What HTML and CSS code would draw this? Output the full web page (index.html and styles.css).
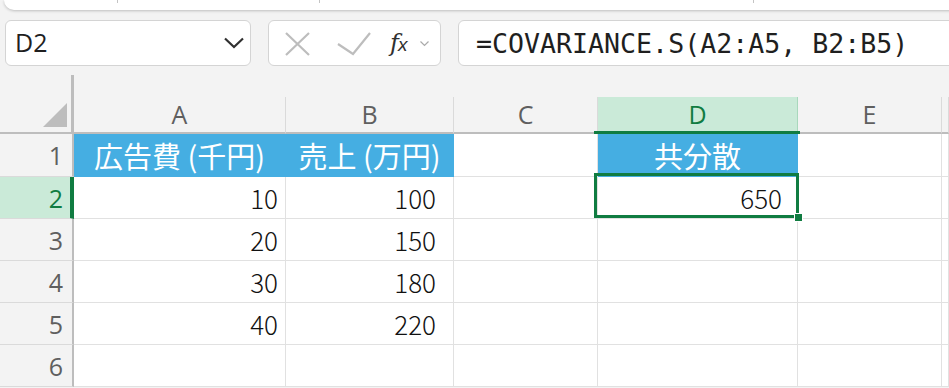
FILE: index.html
```html
<html>
  <head>
    <link rel="stylesheet" href="styles.css">
  </head>
  <body>
    <div class="topbar">
      <span class="tick t1"></span>
      <span class="tick t2"></span>
      <span class="tick t3"></span>
    </div>
    <div class="fbar">
      <div class="namebox">
        <span>D2</span>
        <svg width="20" height="12" viewBox="0 0 20 12"><path d="M1 1.5 L10 10 L19 1.5" fill="none" stroke="#303030" stroke-width="2.2"/></svg>
      </div>
      <div class="fxbox">
        <svg class="ico-x" width="25" height="24" viewBox="0 0 25 24"><path d="M1 1 L24 23 M24 1 L1 23" stroke="#bdbdbd" stroke-width="2.2" fill="none"/></svg>
        <svg class="ico-ok" width="34" height="24" viewBox="0 0 34 24"><path d="M1 12 L16 22 L33 1" stroke="#bdbdbd" stroke-width="2.2" fill="none"/></svg>
        <span class="fx"><i>f</i><i class="sub">x</i></span>
        <svg class="ico-dd" width="9" height="6" viewBox="0 0 9 6"><path d="M0.5 0.5 L4.5 4.5 L8.5 0.5" stroke="#aaaaaa" stroke-width="1.2" fill="none"/></svg>
      </div>
      <div class="formula">=COVARIANCE.S(A2:A5, B2:B5)</div>
    </div>

    <div class="sheet">
      <div class="corner">
        <svg width="74" height="59" viewBox="0 0 74 59"><polygon points="43,52 67,52 67,28" fill="#bdbdbd"/></svg>
      </div>
      <div class="spacer"></div>

      <div class="colhead">A</div>
      <div class="colhead">B</div>
      <div class="colhead">C</div>
      <div class="colhead sel">D</div>
      <div class="colhead">E</div>
      <div class="colhead"></div>

      <div class="rowhead">1</div>
      <div class="cell title">広告費 (千円)</div>
      <div class="cell title">売上 (万円)</div>
      <div class="cell"></div>
      <div class="cell title">共分散</div>
      <div class="cell"></div>
      <div class="cell"></div>

      <div class="rowhead sel">2</div>
      <div class="cell num a">10</div>
      <div class="cell num b">100</div>
      <div class="cell"></div>
      <div class="cell num d active">650</div>
      <div class="cell"></div>
      <div class="cell"></div>

      <div class="rowhead">3</div>
      <div class="cell num a">20</div>
      <div class="cell num b">150</div>
      <div class="cell"></div>
      <div class="cell"></div>
      <div class="cell"></div>
      <div class="cell"></div>

      <div class="rowhead">4</div>
      <div class="cell num a">30</div>
      <div class="cell num b">180</div>
      <div class="cell"></div>
      <div class="cell"></div>
      <div class="cell"></div>
      <div class="cell"></div>

      <div class="rowhead">5</div>
      <div class="cell num a">40</div>
      <div class="cell num b">220</div>
      <div class="cell"></div>
      <div class="cell"></div>
      <div class="cell"></div>
      <div class="cell"></div>

      <div class="rowhead">6</div>
      <div class="cell"></div>
      <div class="cell"></div>
      <div class="cell"></div>
      <div class="cell"></div>
      <div class="cell"></div>
      <div class="cell"></div>
    </div>
  </body>
</html>
```

FILE: styles.css
```css
* {
  box-sizing: border-box;
}
body {
  margin: 0;
  background: #f3f3f3;
  overflow: hidden;
  font-family: "Open Sans", "Noto Sans CJK JP", sans-serif;
}

/* top ribbon edge */
.topbar {
  height: 10px;
  margin-left: 4px;
  margin-right: -20px;
  background: #fff;
  border-radius: 0 0 10px 10px;
  box-shadow: 0 1px 3px rgba(0, 0, 0, 0.22);
  display: flex;
  align-items: flex-start;
}
.tick {
  width: 1px;
  height: 3px;
  background: #c4c4c4;
}
.t1 { margin-left: 113px; }
.t2 { margin-left: 201px; }
.t3 { margin-left: 433px; }

/* formula bar */
.fbar {
  margin-top: 10px;
  height: 46px;
  display: flex;
  padding-left: 5px;
}
.namebox {
  width: 246px;
  background: #fff;
  border: 1.5px solid #d4d4d4;
  border-radius: 6px;
  display: flex;
  align-items: center;
  justify-content: space-between;
  padding: 0 6px 0 9px;
  font-size: 25px;
  color: #1f1f1f;
}
.namebox span {
  margin-top: -2px;
}
.fxbox {
  margin-left: 17px;
  width: 173px;
  background: #fff;
  border: 1.5px solid #d4d4d4;
  border-radius: 6px;
  display: flex;
  align-items: center;
  padding-left: 16px;
}
.ico-x { margin-top: 1px; }
.ico-ok { margin-left: 27px; margin-top: 1px; }
.fx {
  margin-left: 19px;
  font-family: "DejaVu Serif", serif;
  color: #303030;
  display: flex;
  align-items: baseline;
}
.fx i {
  font-size: 24px;
}
.fx .sub {
  font-family: "Liberation Sans", sans-serif;
  font-size: 19px;
  margin-left: -1px;
}
.ico-dd { margin-left: 13px; margin-top: 2px; }
.formula {
  margin-left: 17px;
  flex: 1;
  margin-right: -20px;
  background: #fff;
  border: 1.5px solid #d4d4d4;
  border-radius: 6px;
  padding-left: 17px;
  display: flex;
  align-items: center;
  font-family: "DejaVu Sans Mono", monospace;
  font-size: 26.6px;
  color: #1f1f1f;
  white-space: nowrap;
}

/* grid */
.sheet {
  margin-top: 9px;
  display: grid;
  grid-template-columns: 74px 212px 168px 144px 200px 144px 1fr;
  grid-template-rows: 22px 37px 43px repeat(5, 42px);
}
.corner {
  grid-row: 1 / span 2;
  border-right: 3px solid #bdbdbd;
  border-bottom: 2px solid #bdbdbd;
}
.corner svg {
  display: block;
}
.spacer {
  grid-column: 2 / span 6;
}
.colhead {
  background: #f3f3f3;
  border-right: 1px solid #dadada;
  border-bottom: 2px solid #bdbdbd;
  color: #5f5f5f;
  font-size: 25px;
  display: flex;
  align-items: center;
  justify-content: center;
  padding-bottom: 2px;
}
.colhead.sel {
  position: relative;
  background: #caead8;
  color: #107c41;
  border-right-color: #a8d8bc;
}
.colhead.sel::after {
  content: '';
  position: absolute;
  left: -4px;
  right: -3px;
  bottom: -2px;
  height: 3px;
  background: #107c41;
}
.rowhead {
  background: #f3f3f3;
  border-right: 2px solid #bdbdbd;
  border-bottom: 1px solid #dadada;
  color: #5f5f5f;
  font-size: 25px;
  display: flex;
  align-items: center;
  justify-content: flex-end;
  padding-right: 9px;
}
.rowhead.sel {
  background: #caead8;
  color: #107c41;
  border-right: 4px solid #107c41;
  padding-right: 7px;
}
.cell {
  background: #fff;
  border-right: 1px solid #e1e1e1;
  border-bottom: 1px solid #e1e1e1;
  display: flex;
  align-items: center;
}
.title {
  background: #45aee2;
  border-color: #45aee2;
  color: #fff;
  justify-content: center;
  font-family: "Noto Sans CJK JP", sans-serif;
  font-weight: 400;
  font-size: 29px;
}
.num {
  justify-content: flex-end;
  font-family: "Noto Sans CJK JP", sans-serif;
  font-weight: 300;
  font-size: 26px;
  color: #111;
}
.num.a { padding-right: 7px; }
.num.b { padding-right: 17px; }
.num.d { padding-right: 15px; }
.active {
  position: relative;
  z-index: 1;
}
.active::after {
  content: '';
  position: absolute;
  left: -4px;
  top: -4px;
  right: -2px;
  bottom: 0;
  border: 3px solid #107c41;
}
.active::before {
  content: '';
  position: absolute;
  right: -6px;
  bottom: -4px;
  width: 7px;
  height: 7px;
  background: #107c41;
  border: 1px solid #fff;
  z-index: 2;
}
```
